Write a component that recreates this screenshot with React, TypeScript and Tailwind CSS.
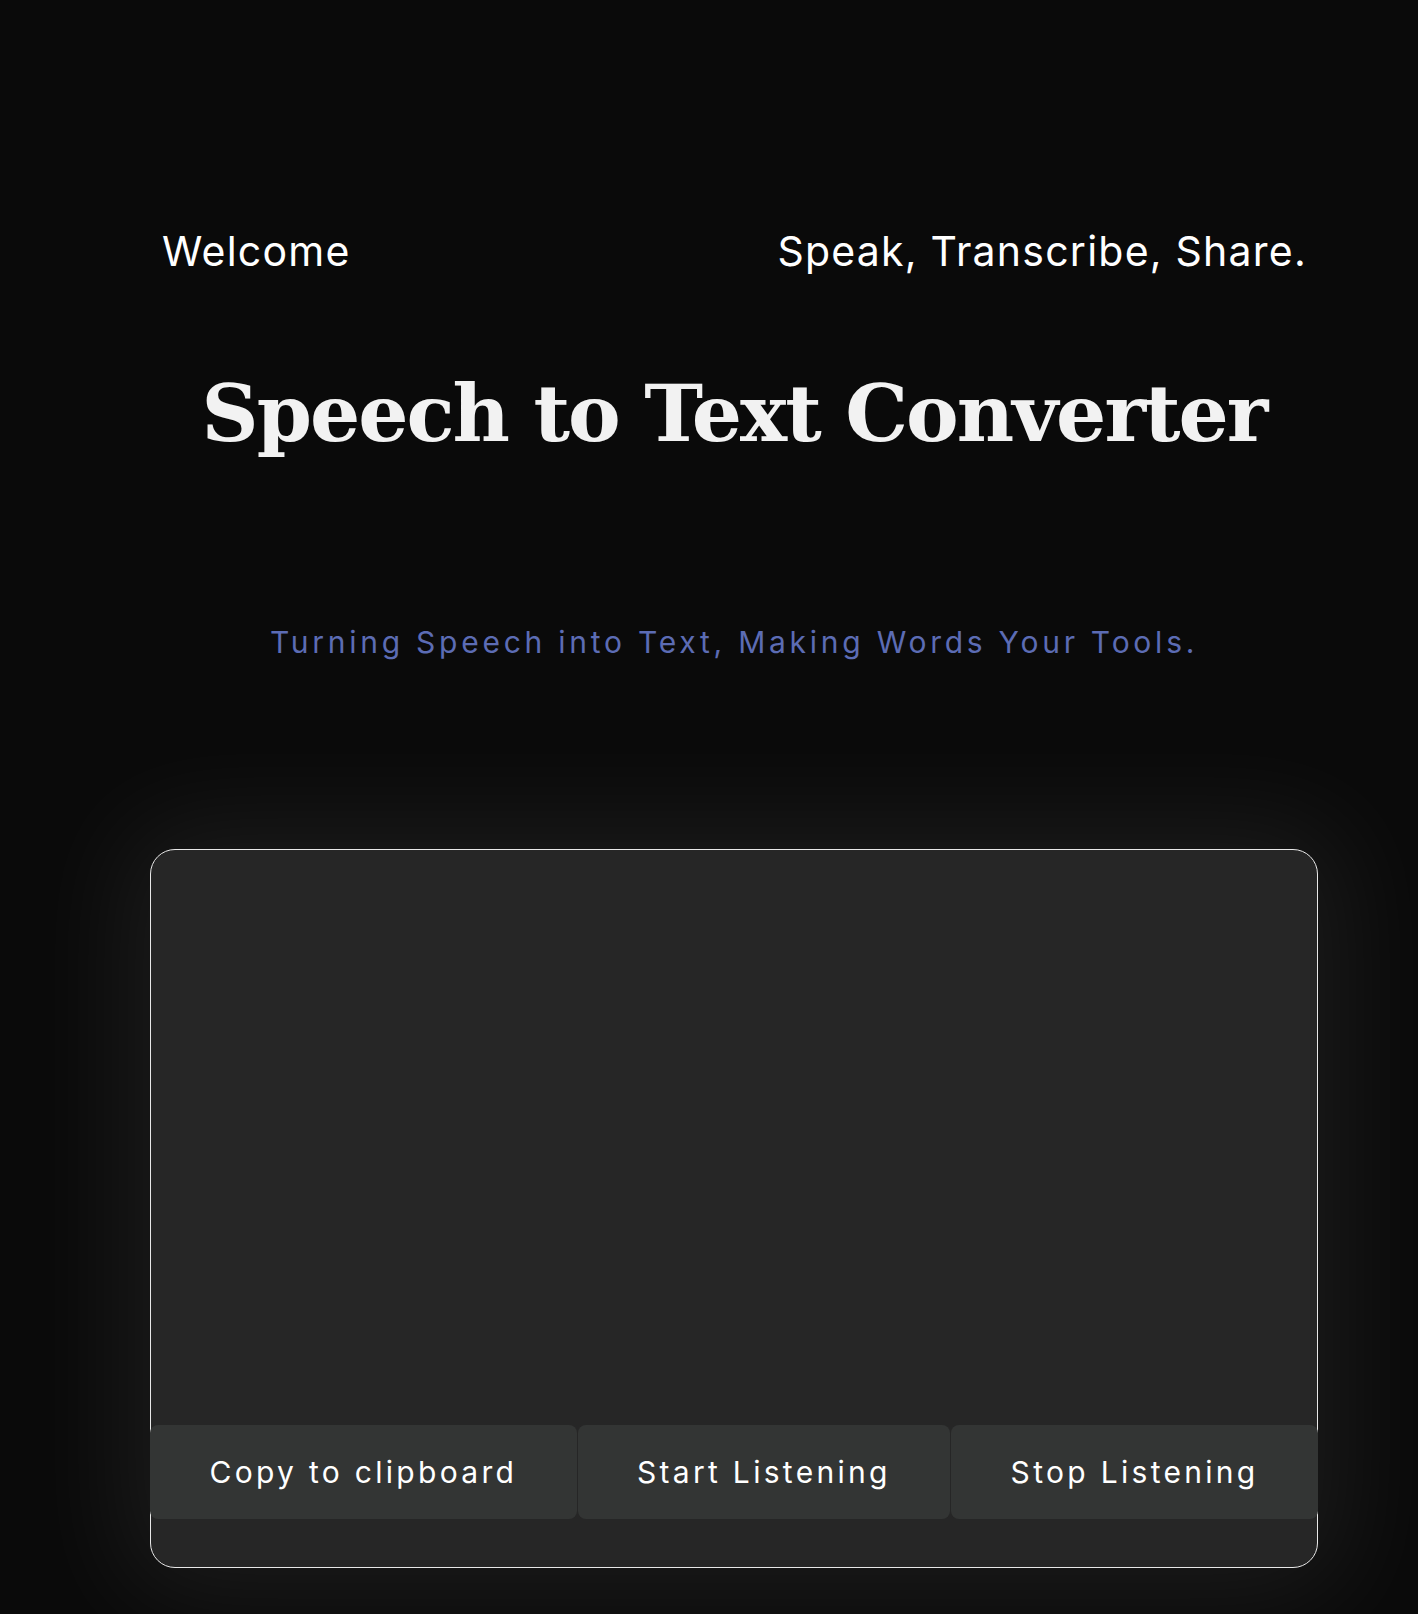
const sans = "font-['Inter','Noto_Sans',sans-serif]";

const ActionButton = ({ label }: { label: string }) => (
  <button
    type="button"
    className={`flex h-[94px] flex-auto items-center justify-center rounded-lg bg-[#333534] text-[30px] tracking-[0.11em] text-white ${sans}`}
  >
    {label}
  </button>
);

const App = () => (
  <div className="min-h-[1614px] w-full bg-[#0a0a0a] pb-[47px]">
    <header
      className={`flex items-start justify-between pl-[162px] pr-[111px] pt-[231px] text-[41px] leading-none tracking-[0.03em] text-white ${sans}`}
    >
      <span>Welcome</span>
      <span>Speak, Transcribe, Share.</span>
    </header>

    <div className="ml-[150px] flex w-[1168px] flex-col items-center">
      <h1 className="mt-[102px] whitespace-nowrap font-['DejaVu_Serif',serif] text-[79px] font-bold leading-none tracking-[-2px] text-[#f2f2f2]">
        Speech to Text Converter
      </h1>
      <p
        className={`mt-[174px] text-[30px] leading-none tracking-[0.125em] text-[#5c6cb4] ${sans}`}
      >
        Turning Speech into Text, Making Words Your Tools.
      </p>

      <section className="mt-[192px] flex h-[719px] w-full flex-col rounded-[25px] border border-[#e8e8e8] bg-[#262626] shadow-[0_0_110px_30px_rgba(255,255,255,0.07)]">
        <textarea
          aria-label="Transcript"
          className="flex-1 resize-none bg-transparent p-6 text-white outline-none"
        />
        <div className="-mx-px mb-[48px] flex gap-px">
          <ActionButton label="Copy to clipboard" />
          <ActionButton label="Start Listening" />
          <ActionButton label="Stop Listening" />
        </div>
      </section>
    </div>
  </div>
);

export default App;
